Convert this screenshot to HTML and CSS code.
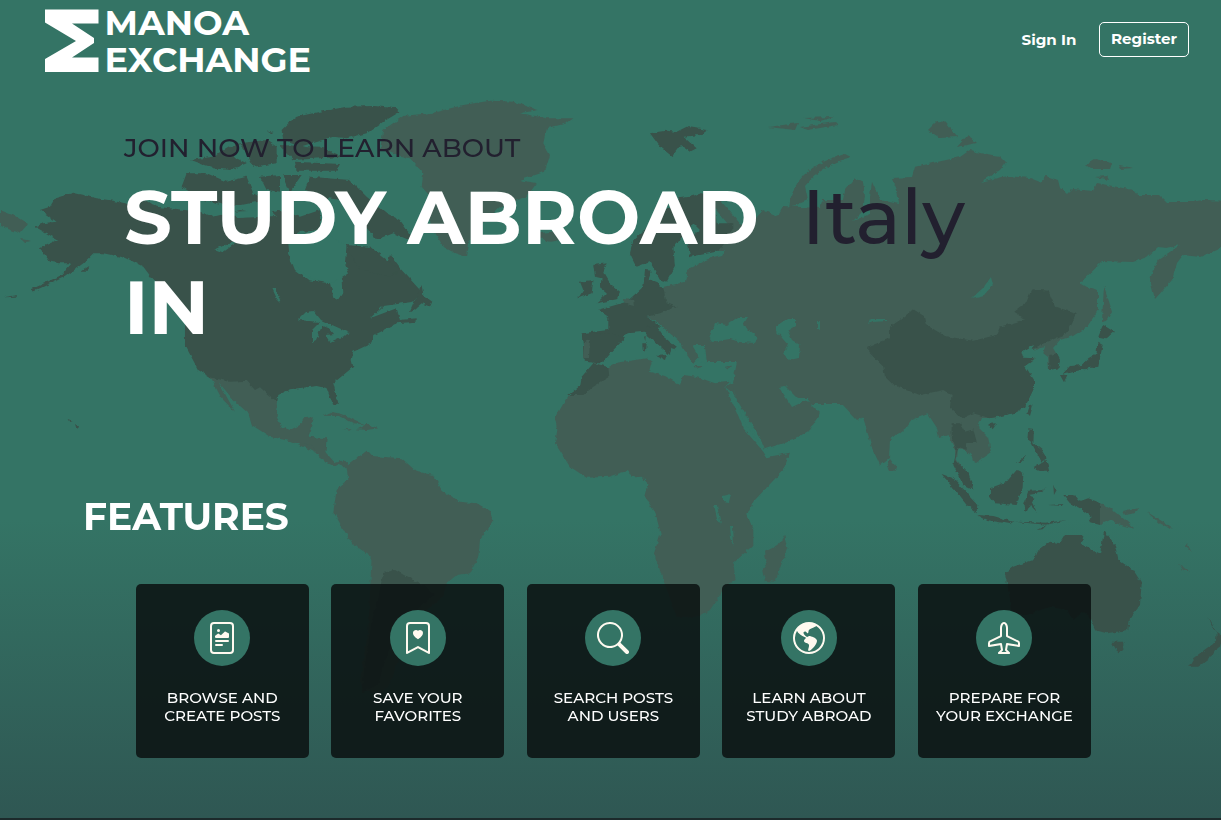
FILE: index.html
```html
<!DOCTYPE html>
<html lang="en">
<head>
<meta charset="utf-8">
<title>Manoa Exchange</title>
<link rel="stylesheet" href="styles.css">
</head>
<body>
<div class="page">
  <svg class="map" viewBox="0 0 1221 820" aria-hidden="true">
    <defs>
      <filter id="coast" x="0" y="0" width="1221" height="820" filterUnits="userSpaceOnUse" color-interpolation-filters="sRGB">
        <feTurbulence type="fractalNoise" baseFrequency="0.2" numOctaves="2" seed="4" result="n"/>
        <feDisplacementMap in="SourceGraphic" in2="n" scale="4" xChannelSelector="R" yChannelSelector="G"/>
      </filter>
    </defs>
    <g filter="url(#coast)">
      <g class="land">
        <path d="M702 193 720 200 743 227 757 217 763 210 777 217 783 206 800 207 820 208 823 200 843 200 845 190 855 178 863 182 865 197 862 212 853 221 870 214 870 197 872 182 880 200 899 204 897 190 892 178 912 177 915 167 937 162 960 157 970 150 980 153 1000 156 1006 162 1000 170 980 182 1007 176 1030 178 1040 182 1045 176 1058 180 1060 188 1067 194 1072 189 1093 191 1097 183 1133 190 1137 195 1160 195 1167 202 1193 202 1203 200 1230 201V244L1200 257 1183 255 1177 263 1172 280 1155 299 1150 280 1153 270 1158 260 1180 245 1167 248 1158 247 1147 257 1133 262 1103 261 1080 283 1087 287 1098 290 1098 310 1087 327 1073 336 1060 340 1053 348 1060 360 1058 368 1049 370 1048 357 1043 353 1045 347 1032 350 1034 345 1020 352 1023 358 1036 358 1025 366 1034 380V388L1025 407 1013 413 993 418H982L978 427 988 437 991 452 975 463 973 457 965 450 958 448 957 460 968 475 973 490 963 485 955 465V450L948 435 939 438 937 428 928 414 912 420 907 427 890 440 889 458 880 465 872 448 863 417 857 420 842 404H810L808 398H797L785 386 779 387 792 407 807 400 820 413 810 430 793 440 765 449 760 437 747 417 733 393 725 387 733 382 737 362H720L707 362 705 347 698 347 698 357 693 363 687 355 680 342 658 323 647 317 663 287 685 282 687 270 713 257 733 230Z"/>
        <path d="M789 208Q792 168 845 154L851 157Q822 165 805 186L808 200ZM928 130 937 121 945 122 958 137 940 138ZM957 147 968 135 977 143ZM1085 165 1095 159 1112 163 1110 169 1090 169ZM1118 165 1134 168 1120 169ZM1096 177 1107 176 1109 180ZM800 127 835 122 838 125 808 130ZM768 127 798 123 795 130ZM804 118 834 117 820 121Z"/>
        <path d="M0 210 15 216 28 224 20 233 8 229 0 226ZM21 239 32 241 24 242Z"/>
        <path d="M1104 286 1112 311 1107 320 1102 321ZM890 459 896 467 894 472 889 472 887 465ZM1100 503 1116 512 1135 529 1118 524 1110 520 1100 525ZM1123 511 1139 507 1136 513 1125 515ZM1147 512 1165 523 1173 529 1160 524ZM1187 543 1192 553 1186 547ZM1179 564 1190 572 1183 570Z"/>
        <g transform="translate(530 240) scale(.3333)">
          <path d="M195 368 235 382 260 368 350 355 365 365 357 395 405 408 450 435 460 405 500 410 555 430 600 425 585 440 620 515 640 565 700 635 710 652 780 638 760 690 670 785 652 825 670 870V915L610 970 617 1020 585 1040 540 1110 505 1130 440 1130 400 1020 372 940 392 880 375 815 343 770 353 730 335 710 310 712 290 693 235 710 170 713 120 680 75 610 82 570 75 535 115 465 150 440Z"/>
          <path d="M763 885 772 925 735 1025 705 1022 697 990 710 970 705 935 745 915ZM495 378 520 378 510 383 495 382ZM585 382 605 376 597 385Z"/>
        </g>
        <g transform="translate(0 180) scale(.3333)">
          <path d="M630 590 690 603 740 600 780 620 834 665 830 710 845 740 870 750 900 735 910 715 942 712 925 770 980 775 975 830 950 820 880 785 810 770 755 735 745 700 700 660 655 605 705 695 665 655Z"/>
          <path d="M968 707 995 695 1035 705 1090 732 1060 730 1020 708ZM1070 748 1100 732 1135 745 1100 750ZM1030 748H1055L1048 752Z"/>
        </g>
        <g transform="translate(300 430) scale(.3333)">
          <path d="M0 0 25 0 25 20 78 30 75 65 105 98 130 90 145 105 200 62 215 78 305 85 350 125 400 135 425 180 480 215 530 220 575 245 580 275 540 330 535 380 510 430 470 435 440 460 430 500 380 540 330 600 270 760 245 790 190 780 180 750 205 600 215 380 155 340 100 245 110 180 145 150 140 115 125 100 105 110 65 90 35 45 0 38Z"/>
        </g>
        <g transform="translate(400 80) scale(.3333)">
          <path d="M10 108 100 98 190 75 270 62 340 65 415 90 360 100 440 115 520 115 500 130 440 145 430 190 450 225 435 275 360 300 410 310 380 350 300 380 230 450 205 485 198 530 165 520 130 500 95 440 80 380 100 360 65 320 70 280 30 235 -60 210 -50 150Z"/>
          <path d="M420 460 490 450 510 475 450 485 420 475Z"/>
        </g>
      </g>
      <g class="member">
        <g transform="translate(0 180) scale(.3333)">
          <path d="M120 90 150 80 165 55 220 38 290 55 340 62 400 75 440 60 470 80 600 95 640 110 720 90 800 105 840 90 900 110 960 90 960 140 900 190 865 220 885 270 925 300 990 310 1000 350 1015 358 1027 340 1025 295 1048 280 1035 250 1040 195 1100 200 1130 250 1160 255 1170 225 1200 265 1265 335 1240 365 1150 378 1110 415 1190 385 1200 420 1250 415 1250 425 1190 430 1120 465 1115 490 1060 515 1055 540 1060 560 1000 610 1015 670 1000 678 980 625 950 618 870 628 835 645 832 665 800 640 780 622 765 630 740 602 690 605 630 592 595 570 555 495 555 430 490 320 460 300 430 260 380 235 310 220 280 220 250 250 195 290 100 334 95 328 185 285 215 250 180 250 150 245 120 205 175 180 105 140 130 130 170 125Z"/>
          <path d="M1230 395 1265 315 1270 345 1297 365 1290 380 1265 370 1235 395ZM10 352 55 345 50 350ZM240 275 268 258 262 275ZM225 732 238 740 230 748ZM203 717 217 722 208 726Z"/>
        </g>
        <g transform="scale(.3333)">
          <path d="M890 350 960 335 1040 320 1120 318 1190 325 1200 335 1150 365 1100 400 1040 415 1000 410 900 440 850 420 845 390 870 365ZM570 480 640 470 690 440 720 430 700 470 740 490 690 510 640 505ZM720 430 800 420 830 440 830 490 760 500 740 460ZM545 560 560 520 620 520 680 545 740 530 760 580 800 600 700 620 610 600ZM780 530 840 525 840 575 800 570ZM850 525 905 525 870 575ZM930 530 1050 540 1100 590 1160 640 1200 660 1250 730 1180 700 1130 720 1080 660 1020 600 960 590 915 570ZM885 485 1020 492 1010 512 890 512ZM840 435 960 440 1030 470 880 480ZM1040 740 1110 740 1200 810 1170 830 1080 810ZM970 725 1000 725 990 740ZM805 393 820 395 812 402Z"/>
        </g>
        <g transform="translate(400 80) scale(.3333)">
          <path d="M750 160 800 152 830 155 860 140 920 150 900 165 850 170 890 205 870 215 840 195 815 228 780 200ZM836 355 870 350 905 340 940 360 950 430 1000 430 1000 450 950 520 870 530 862 480 900 450 880 430 850 470 820 500 825 560 800 605 780 600 750 545 710 560 690 520 700 480Z"/>
          <path d="M735 570 755 572 745 600 770 610 790 625 800 670 830 680 780 700 740 710 780 740 770 760 830 800 820 810 735 755 680 760 640 800 600 850 555 845 545 760 625 750 625 710 595 690 680 665 730 620ZM580 555 620 550 610 575 630 610 660 635 650 658 590 670 620 640 600 625 605 595 585 590ZM540 605 580 600 575 640 535 655 550 630Z"/>
        </g>
        <g transform="translate(530 240) scale(.3333)">
          <path d="M190 370 235 382 238 412 190 440 160 465H115L150 438 155 410ZM158 282 240 280 285 295 250 330 225 360 190 368 160 355ZM350 260 380 260 400 290 440 320 425 322 420 345 380 310 350 285ZM378 348 410 345 405 360ZM337 310 350 310 348 335 338 332ZM342 290 347 288 346 304Z"/>
        </g>
        <g transform="translate(840 260) scale(.3333)">
          <path d="M220 148 255 170 260 195 315 228 400 242 470 225 480 200 555 178 520 155 560 125 575 88 625 92 645 140 710 160 690 200 670 225 600 255 575 270 583 253 540 278 550 293 585 295 555 318 582 360V385L555 440 520 460 450 475 400 460 365 475 330 440 335 405 310 390 240 405 160 375 135 350 130 320 85 275 85 260 150 235 150 200 180 180ZM445 492 468 490 455 508ZM570 435 580 432 570 468 562 460Z"/>
          <path d="M335 490 360 490 375 515 400 508 410 545 380 550 380 570 355 560 345 600 385 640 400 690 370 675 340 615 350 570 335 530ZM305 642 340 655 415 735 413 760 380 735ZM412 765 460 768 520 785 510 792 440 780ZM520 785 620 788 680 780 620 794ZM590 810 620 795 608 808ZM450 685 500 665 530 630 550 640 548 680 530 735 465 730 450 710ZM565 692 610 690 620 680 605 698 565 705 585 712 575 725 590 755 570 735 560 755 550 740ZM640 675 650 690 642 705ZM530 610 560 585 545 605ZM565 508 582 510 580 550 605 570 620 595 605 605 575 550 562 540ZM580 625 620 600 628 635 605 635ZM670 705 700 705 715 725 745 715 780 728V795L745 785 755 770 720 745 690 730ZM625 735 670 732 665 738Z"/>
          <path d="M790 195 822 215 800 235 775 230ZM772 245 788 255 775 320 745 325 700 335 665 345 690 318 725 315 745 295 770 280ZM660 345 682 345 672 367ZM628 285 650 280 660 300 655 325 628 330Z"/>
          <path d="M495 940 520 920 580 900 590 875 630 845 660 850 675 825 730 825 725 855 780 882 793 810 825 855 835 900 880 930 905 970 900 1035 870 1075 865 1110 800 1120 765 1110 745 1065 730 1055 700 1080 680 1050 630 1040 560 1065 520 1065ZM815 1145 850 1145 850 1170 835 1180Z"/>
          <path d="M1105 1070 1120 1110 1150 1130 1150 1150 1130 1165 1115 1190 1075 1220 1045 1220 1060 1195 1100 1165 1128 1145 1130 1120Z"/>
        </g>
        <path d="M383 573 395 570 420 584 435 594 405 620 395 635 387 655 378 685 362 692 364 670 372 620 378 600Z"/>
      </g>
      <path class="land" d="M584 342 590 340 589 358 583 358ZM622 299 633 300 634 306 626 304Z"/>
      <g class="sea">
        <path d="M709 338 715 323 727 325 738 317 748 317 743 325 758 337 755 343 740 342 730 339 712 342ZM776 326 787 319 796 319 796 326 788 331 792 340 800 345 799 358 790 360 783 354 788 345 777 332ZM723 496 731 494 729 502 723 501ZM714 505 717 505 721 525 717 518ZM730 526 733 526 734 545 731 538ZM972 298 983 288 991 277 993 285 984 295ZM868 324 870 319 887 319 887 321 872 322ZM817 321 820 321 820 330 817 329ZM733 388 740 408 747 418 762 450 757 441 743 420ZM690 257 715 252 725 250 722 255 705 259 695 266ZM692 345 704 345 706 362 699 363 698 355Z"/>
        <path d="M298 320 306 312 314 311 321 320 350 333 330 342 326 335 334 334 330 329 322 326 316 340 312 342 312 330 320 322ZM272 288 276 288 281 303 277 299ZM214 250 225 245 240 240 222 253ZM225 212 270 210 276 216 240 218ZM288 240 300 232 320 230 345 245 345 275 332 283 310 278 290 262Z"/>
      </g>
    </g>
  </svg>

  <header class="header">
    <a class="brand">
      <svg class="brand-mark" viewBox="0 0 54 64"><path d="M0 .5H53.500V14.500H27L49 29V34L27 48.500H53.500V63H0V50L31 32 0 13.500Z"/></svg>
      <span class="brand-name"><span>MANOA</span><span>EXCHANGE</span></span>
    </a>
    <nav class="nav">
      <a class="sign-in">Sign In</a>
      <a class="register">Register</a>
    </nav>
  </header>

  <main>
    <section class="hero">
      <p class="kicker">JOIN NOW TO LEARN ABOUT</p>
      <div class="headline">
        <h1>STUDY ABROAD IN</h1>
        <span class="country">Italy</span>
      </div>
    </section>
    <section class="features">
      <h2>FEATURES</h2>
      <div class="cards">
        <article class="card">
          <span class="disc"><svg viewBox="0 0 16 16"><path d="M7 4.250a.75.75 0 1 1-1.500 0 .75.75 0 0 1 1.500 0m-.861 1.542 1.330.886 1.854-1.855a.25.25 0 0 1 .289-.047l1.888.974V7.500a.5.5 0 0 1-.5.5H5a.5.5 0 0 1-.5-.5V7s1.540-1.274 1.639-1.208M5 9a.5.5 0 0 0 0 1h6a.5.5 0 0 0 0-1zm0 2a.5.5 0 0 0 0 1h3a.5.5 0 0 0 0-1z"/><path d="M2 2a2 2 0 0 1 2-2h8a2 2 0 0 1 2 2v12a2 2 0 0 1-2 2H4a2 2 0 0 1-2-2zm10-1H4a1 1 0 0 0-1 1v12a1 1 0 0 0 1 1h8a1 1 0 0 0 1-1V2a1 1 0 0 0-1-1"/></svg></span>
          <p>BROWSE AND<br>CREATE POSTS</p>
        </article>
        <article class="card">
          <span class="disc"><svg viewBox="0 0 16 16"><path d="M8 4.410c1.387-1.425 4.854 1.070 0 4.277C3.146 5.480 6.613 2.986 8 4.412z"/><path d="M2 2a2 2 0 0 1 2-2h8a2 2 0 0 1 2 2v13.500a.5.5 0 0 1-.777.416L8 13.101l-5.223 2.815A.5.5 0 0 1 2 15.500zm2-1a1 1 0 0 0-1 1v12.566l4.723-2.482a.5.5 0 0 1 .554 0L13 14.566V2a1 1 0 0 0-1-1z"/></svg></span>
          <p>SAVE YOUR<br>FAVORITES</p>
        </article>
        <article class="card">
          <span class="disc"><svg viewBox="0 0 16 16"><path d="M11.742 10.344a6.500 6.500 0 1 0-1.397 1.398h-.001q.044.06.098.115l3.850 3.850a1 1 0 0 0 1.415-1.414l-3.850-3.850a1 1 0 0 0-.115-.1zM12 6.500a5.500 5.500 0 1 1-11 0 5.500 5.500 0 0 1 11 0"/></svg></span>
          <p>SEARCH POSTS<br>AND USERS</p>
        </article>
        <article class="card">
          <span class="disc"><svg viewBox="0 0 16 16"><path d="M8 0a8 8 0 1 0 0 16A8 8 0 0 0 8 0M2.040 4.326c.325 1.329 2.532 2.540 3.717 3.190.48.263.793.434.743.484q-.121.12-.242.234c-.416.396-.787.749-.758 1.266.035.634.618.824 1.214 1.017.577.188 1.168.38 1.286.983.082.417-.075.988-.22 1.520-.215.782-.406 1.480.22 1.480 1.500-.5 3.798-3.186 4-5 .138-1.243-2-2-3.500-2.500-.478-.16-.755.081-.99.284-.172.15-.322.279-.51.216-.445-.148-2.500-2-1.500-2.500.78-.39.952-.171 1.227.182.078.099.163.208.273.318.609.304.662-.132.723-.633.039-.322.081-.671.277-.867.434-.434 1.265-.791 2.028-1.120.712-.306 1.365-.587 1.579-.88A7 7 0 1 1 2.040 4.327Z"/></svg></span>
          <p>LEARN ABOUT<br>STUDY ABROAD</p>
        </article>
        <article class="card">
          <span class="disc"><svg viewBox="0 0 16 16"><path d="M6.428 1.151C6.708.591 7.213 0 8 0s1.292.592 1.572 1.151C9.861 1.730 10 2.431 10 3v3.691l5.170 2.585a1.500 1.500 0 0 1 .83 1.342V12a.5.5 0 0 1-.582.493l-5.507-.918-.375 2.253 1.318 1.318A.5.5 0 0 1 10.500 16h-5a.5.5 0 0 1-.354-.854l1.319-1.318-.376-2.253-5.507.918A.5.5 0 0 1 0 12v-1.382a1.500 1.500 0 0 1 .83-1.342L6 6.691V3c0-.568.14-1.271.428-1.849m.894.448C7.111 2.020 7 2.569 7 3v4a.5.5 0 0 1-.276.447l-5.448 2.724a.5.5 0 0 0-.276.447v.792l5.418-.903a.5.5 0 0 1 .575.41l.5 3a.5.5 0 0 1-.14.437L6.708 15h2.586l-.647-.646a.5.5 0 0 1-.14-.436l.5-3a.5.5 0 0 1 .576-.411L15 11.410v-.792a.5.5 0 0 0-.276-.447L9.276 7.447A.5.5 0 0 1 9 7V3c0-.432-.11-.979-.322-1.401C8.458 1.159 8.213 1 8 1s-.458.158-.678.599"/></svg></span>
          <p>PREPARE FOR<br>YOUR EXCHANGE</p>
        </article>
      </div>
    </section>
  </main>
</div>
</body>
</html>
```
FILE: styles.css
```css
* { box-sizing: border-box; }
body { margin: 0; font-family: Montserrat, Inter, "Liberation Sans", sans-serif; color: #fff; }
h1, h2, p { margin: 0; }
.page {
  position: relative;
  height: 820px;
  overflow: hidden;
  background: linear-gradient(#347465 0, #347465 520px, #2f5753 818px);
  border-bottom: 2px solid #1c2a2b;
}
.map { position: absolute; inset: 0; width: 1221px; height: 820px; }
.land { fill: #415e55; }
.member { fill: #39524a; }
.sea { fill: #347465; }
.header, main { position: relative; }

.header { display: flex; justify-content: space-between; height: 82px; padding: 9px 32px 0 44.5px; }
.brand { display: flex; gap: 6px; }
.brand-mark { width: 54px; height: 64px; fill: #fff; }
.brand-name { display: flex; flex-direction: column; margin-top: -5px; font-size: 35px; font-weight: 700; line-height: 37px; }
.nav { display: flex; align-items: flex-start; gap: 22px; padding-top: 13px; font-size: 15.1px; font-weight: 700; }
.sign-in { width: 55.5px; padding-top: 8px; line-height: 20px; white-space: nowrap; }
.register { width: 90px; height: 35px; border: 1px solid #fff; border-radius: 5px; text-align: center; line-height: 32px; }

.hero { height: 416px; padding: 50px 0 0 124px; }
.kicker { font-size: 26.5px; font-weight: 500; line-height: 32px; color: #22202f; }
.headline { display: flex; padding-top: 8px; line-height: 90px; }
h1 { width: 677.5px; font-size: 75px; font-weight: 700; }
.country { font-size: 76.5px; font-weight: 500; color: #22202f; }

.features { padding: 0 130px 0 83px; }
h2 { height: 86px; font-size: 37.6px; font-weight: 700; line-height: 38px; }
.cards { display: flex; justify-content: space-between; padding-left: 52.8px; }
.card { display: flex; flex-direction: column; align-items: center; width: 173px; height: 174px; padding-top: 26px; border-radius: 5px; background: rgba(11, 17, 17, .85); }
.disc { display: grid; place-items: center; width: 56px; height: 56px; border-radius: 50%; background: #347465; }
.disc svg { width: 32px; height: 32px; fill: #fffaf0; }
.card p { padding-top: 23px; font-size: 15.1px; font-weight: 500; line-height: 18px; text-align: center; white-space: nowrap; }
```
